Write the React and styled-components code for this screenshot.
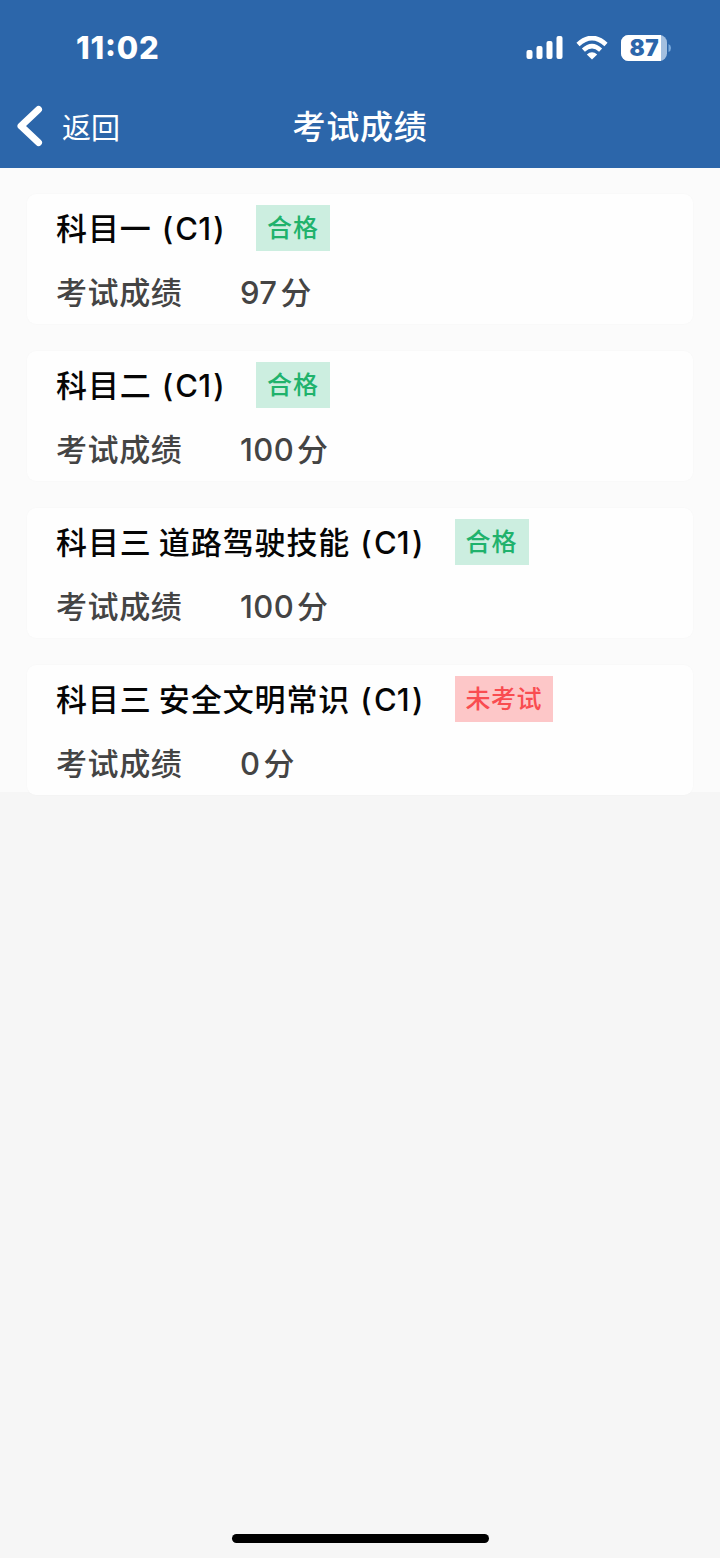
import React from 'react';
import styled, { createGlobalStyle } from 'styled-components';

const results = [
  { subject: '科目一', score: '97', passed: true },
  { subject: '科目二', score: '100', passed: true },
  { subject: '科目三 道路驾驶技能', score: '100', passed: true },
  { subject: '科目三 安全文明常识', score: '0', passed: false },
];

const GlobalStyle = createGlobalStyle`
  * {
    box-sizing: border-box;
  }

  body {
    margin: 0;
    background: #f6f6f6;
    font-family: Inter, 'Noto Sans CJK SC', sans-serif;
  }
`;

const Screen = styled.div`
  display: flex;
  flex-direction: column;
  width: 720px;
  height: 1558px;
`;

const Header = styled.header`
  height: 168px;
  background: #2c66aa;
  color: #fff;
`;

const StatusBar = styled.div`
  display: flex;
  align-items: center;
  justify-content: space-between;
  height: 96px;
  padding: 0 47px 0 76px;
`;

const Clock = styled.span`
  font-size: 31px;
  font-weight: 800;
  line-height: 40px;
  letter-spacing: 0.8px;
`;

const Colon = styled.span`
  line-height: 1;
  vertical-align: 3px;
`;

const StatusIcons = styled.div`
  display: flex;
  align-items: center;
  gap: 13px;
`;

const NavBar = styled.div`
  display: grid;
  grid-template-columns: 1fr auto 1fr;
  align-items: center;
  height: 62px;
`;

const BackButton = styled.button`
  display: flex;
  align-items: center;
  gap: 18px;
  padding: 0 0 0 15px;
  border: 0;
  background: none;
  color: inherit;
  font-family: inherit;
  font-size: 29px;
  line-height: 40px;
`;

const BackText = styled.span`
  padding-top: 3px;
`;

const Title = styled.h1`
  margin: 0;
  font-size: 33px;
  font-weight: 500;
  line-height: 48px;
  letter-spacing: 0.7px;
`;

const List = styled.main`
  display: flex;
  flex-direction: column;
  gap: 27px;
  height: 624px;
  padding: 26px 27px 0;
  background: #fbfbfb;
`;

const Card = styled.section`
  flex: none;
  height: 130px;
  padding: 11px 29px 0;
  border-radius: 9px;
  background: #fefefe;
  box-shadow: 0 0 2px rgba(0, 0, 0, 0.03);
`;

const CardTop = styled.div`
  display: flex;
  align-items: center;
  height: 46px;
`;

const Subject = styled.h2`
  margin: 0;
  padding-top: 1px;
  color: #050505;
  font-size: 31px;
  font-weight: 500;
  line-height: 46px;
  letter-spacing: 0.9px;
  word-spacing: -2px;
  white-space: pre;
`;

const Licence = styled.span`
  margin-left: 10px;
  letter-spacing: 0.2px;
`;

const Code = styled.span`
  margin: 0 2px;
`;

const Badge = styled.span`
  height: 46px;
  margin-left: 31px;
  padding: 0 11px;
  background: ${({ $passed }) => ($passed ? '#cceee0' : '#fdc7c8')};
  color: ${({ $passed }) => ($passed ? '#20b26c' : '#f94c50')};
  font-size: 25px;
  font-weight: 500;
  line-height: 46px;
  letter-spacing: ${({ $passed }) => ($passed ? '1px' : '0.5px')};
`;

const ScoreRow = styled.div`
  display: flex;
  margin-top: 19px;
  color: #444;
  font-size: 31px;
  font-weight: 500;
  line-height: 46px;
`;

const Label = styled.span`
  width: 184px;
  letter-spacing: 0.6px;
`;

const Score = styled.span`
  letter-spacing: 0.4px;
`;

const Unit = styled.span`
  margin-left: 3px;
`;

const HomeIndicator = styled.div`
  width: 257px;
  height: 9px;
  margin: auto auto 15px;
  border-radius: 5px;
  background: #000;
`;

const SignalIcon = () => (
  <svg width="37" height="24" viewBox="0 0 37 24" fill="#fff">
    <rect x="0.5" y="14" width="6" height="9" rx="2" />
    <rect x="10.5" y="10" width="6" height="13" rx="2" />
    <rect x="20.5" y="5" width="6" height="18" rx="2" />
    <rect x="30.5" y="0" width="6" height="23" rx="2" />
  </svg>
);

const WifiIcon = () => (
  <svg width="32" height="24" viewBox="0 0 32 24" fill="none" stroke="#fff">
    <path d="M2 8.5Q16 -4.5 30 8.5" strokeWidth="4.6" />
    <path d="M7.4 14.2Q16 6 24.6 14.2" strokeWidth="4.4" />
    <path d="M16 23.5L10.8 18.4Q16 14 21.2 18.4Z" fill="#fff" stroke="none" />
  </svg>
);

const BatteryIcon = () => (
  <svg width="52" height="26" viewBox="0 0 52 26">
    <rect width="46" height="26" rx="7.5" fill="#a3bfdf" />
    <path d="M7.5 0H40V26H7.5A7.5 7.5 0 0 1 0 18.5V7.5A7.5 7.5 0 0 1 7.5 0Z" fill="#fff" />
    <path d="M47.5 9Q50 10 50 13Q50 16 47.5 17Z" fill="#79a9dc" />
    <text
      x="23.2"
      y="21"
      fill="#2c66aa"
      fontFamily="Inter, sans-serif"
      fontSize="22.5"
      fontWeight="900"
      letterSpacing="0.3"
      textAnchor="middle"
    >
      87
    </text>
  </svg>
);

const BackIcon = () => (
  <svg width="29" height="44" viewBox="0 0 29 44" fill="none">
    <path
      d="M23.5 4.5L6 21L23.5 37.5"
      stroke="#fff"
      strokeWidth="7"
      strokeLinecap="round"
      strokeLinejoin="round"
    />
  </svg>
);

const ResultCard = ({ subject, score, passed }) => (
  <Card>
    <CardTop>
      <Subject>
        {subject}
        <Licence>
          (<Code>C1</Code>)
        </Licence>
      </Subject>
      <Badge $passed={passed}>{passed ? '合格' : '未考试'}</Badge>
    </CardTop>
    <ScoreRow>
      <Label>考试成绩</Label>
      <Score>{score}</Score>
      <Unit>分</Unit>
    </ScoreRow>
  </Card>
);

const App = () => (
  <>
    <GlobalStyle />
    <Screen>
      <Header>
        <StatusBar>
          <Clock>
            11<Colon>:</Colon>02
          </Clock>
          <StatusIcons>
            <SignalIcon />
            <WifiIcon />
            <BatteryIcon />
          </StatusIcons>
        </StatusBar>
        <NavBar>
          <BackButton>
            <BackIcon />
            <BackText>返回</BackText>
          </BackButton>
          <Title>考试成绩</Title>
        </NavBar>
      </Header>
      <List>
        {results.map(result => (
          <ResultCard key={result.subject} {...result} />
        ))}
      </List>
      <HomeIndicator />
    </Screen>
  </>
);

export default App;
